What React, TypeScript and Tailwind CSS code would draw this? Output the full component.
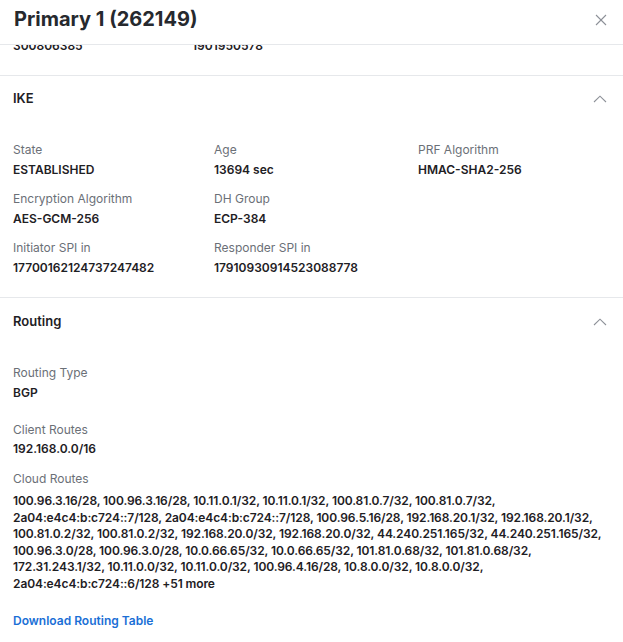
import React from "react";

const Chevron = () => (
  <svg width="14" height="8" viewBox="0 0 14 8" fill="none" className="mr-[3px]">
    <polyline points="1,7 7,1.2 13,7" stroke="#8d9198" strokeWidth="1.1" fill="none" />
  </svg>
);

const Item = ({ label, value }: { label: string; value: string }) => (
  <div>
    <div className="text-[12px] leading-[16px] text-[#6b7077]">{label}</div>
    <div className="mt-[4px] text-[12px] leading-[16px] font-semibold text-[#1e2024]">{value}</div>
  </div>
);

const routes = [
  "100.96.3.16/28, 100.96.3.16/28, 10.11.0.1/32, 10.11.0.1/32, 100.81.0.7/32, 100.81.0.7/32,",
  "2a04:e4c4:b:c724::7/128, 2a04:e4c4:b:c724::7/128, 100.96.5.16/28, 192.168.20.1/32, 192.168.20.1/32,",
  "100.81.0.2/32, 100.81.0.2/32, 192.168.20.0/32, 192.168.20.0/32, 44.240.251.165/32, 44.240.251.165/32,",
  "100.96.3.0/28, 100.96.3.0/28, 10.0.66.65/32, 10.0.66.65/32, 101.81.0.68/32, 101.81.0.68/32,",
  "172.31.243.1/32, 10.11.0.0/32, 10.11.0.0/32, 100.96.4.16/28, 10.8.0.0/32, 10.8.0.0/32,",
  "2a04:e4c4:b:c724::6/128 +51 more",
];

export default function App() {
  return (
    <div
      className="w-[623px] h-[642px] overflow-hidden bg-white flex flex-col"
      style={{ fontFamily: "Inter, 'Noto Sans', sans-serif" }}
    >
      <div className="h-[45px] shrink-0 border-b border-[#e6e8eb] flex items-start justify-between pl-[14px] pr-[16px] pt-[5px]">
        <div className="text-[20px] leading-[28px] font-bold text-[#26292e]">
          Primary 1 (262149)
        </div>
        <svg width="12" height="12" viewBox="0 0 12 12" className="mt-[9px]">
          <line x1="1" y1="1" x2="11" y2="11" stroke="#8d9198" strokeWidth="1.1" />
          <line x1="11" y1="1" x2="1" y2="11" stroke="#8d9198" strokeWidth="1.1" />
        </svg>
      </div>

      <div className="flex-1 overflow-hidden">
        <div className="-mt-[7px] px-[13px] pb-[21px] flex text-[12px] leading-[16px] font-semibold text-[#1e2024]">
          <div className="w-[179px]">300806385</div>
          <div>1901950578</div>
        </div>

        <div className="border-t border-[#e6e8eb]">
          <div className="h-[46px] flex items-center justify-between px-[13px]">
            <div className="text-[13px] font-semibold text-[#1e2024]">IKE</div>
            <Chevron />
          </div>
          <div className="px-[13px] pt-[20px] pb-[21px] grid grid-cols-[201px_204px_1fr] gap-y-[13px]">
            <Item label="State" value="ESTABLISHED" />
            <Item label="Age" value="13694 sec" />
            <Item label="PRF Algorithm" value="HMAC-SHA2-256" />
            <Item label="Encryption Algorithm" value="AES-GCM-256" />
            <Item label="DH Group" value="ECP-384" />
            <div />
            <Item label="Initiator SPI in" value="17700162124737247482" />
            <Item label="Responder SPI in" value="17910930914523088778" />
            <div />
          </div>
        </div>

        <div className="border-t border-[#e6e8eb]">
          <div className="h-[47px] flex items-center justify-between px-[13px]">
            <div className="text-[13px] font-semibold text-[#1e2024]">Routing</div>
            <Chevron />
          </div>
          <div className="px-[13px] pt-[20px]">
            <Item label="Routing Type" value="BGP" />
            <div className="mt-[21px]">
              <div className="text-[12px] leading-[16px] text-[#6b7077]">Client Routes</div>
              <div className="mt-[3px] text-[12px] leading-[16px] font-semibold text-[#1e2024]">192.168.0.0/16</div>
            </div>
            <div className="mt-[14px]">
              <div className="text-[12px] leading-[16px] text-[#6b7077]">Cloud Routes</div>
              <div className="mt-[6px] text-[12px] leading-[16.5px] font-semibold text-[#1e2024] tracking-[-0.1px]">
                {routes.map((r) => (
                  <div key={r} className="whitespace-nowrap">{r}</div>
                ))}
              </div>
            </div>
            <div className="mt-[21px] text-[12px] leading-[16px] font-semibold text-[#1a6fd6]">
              Download Routing Table
            </div>
          </div>
        </div>
      </div>
    </div>
  );
}
